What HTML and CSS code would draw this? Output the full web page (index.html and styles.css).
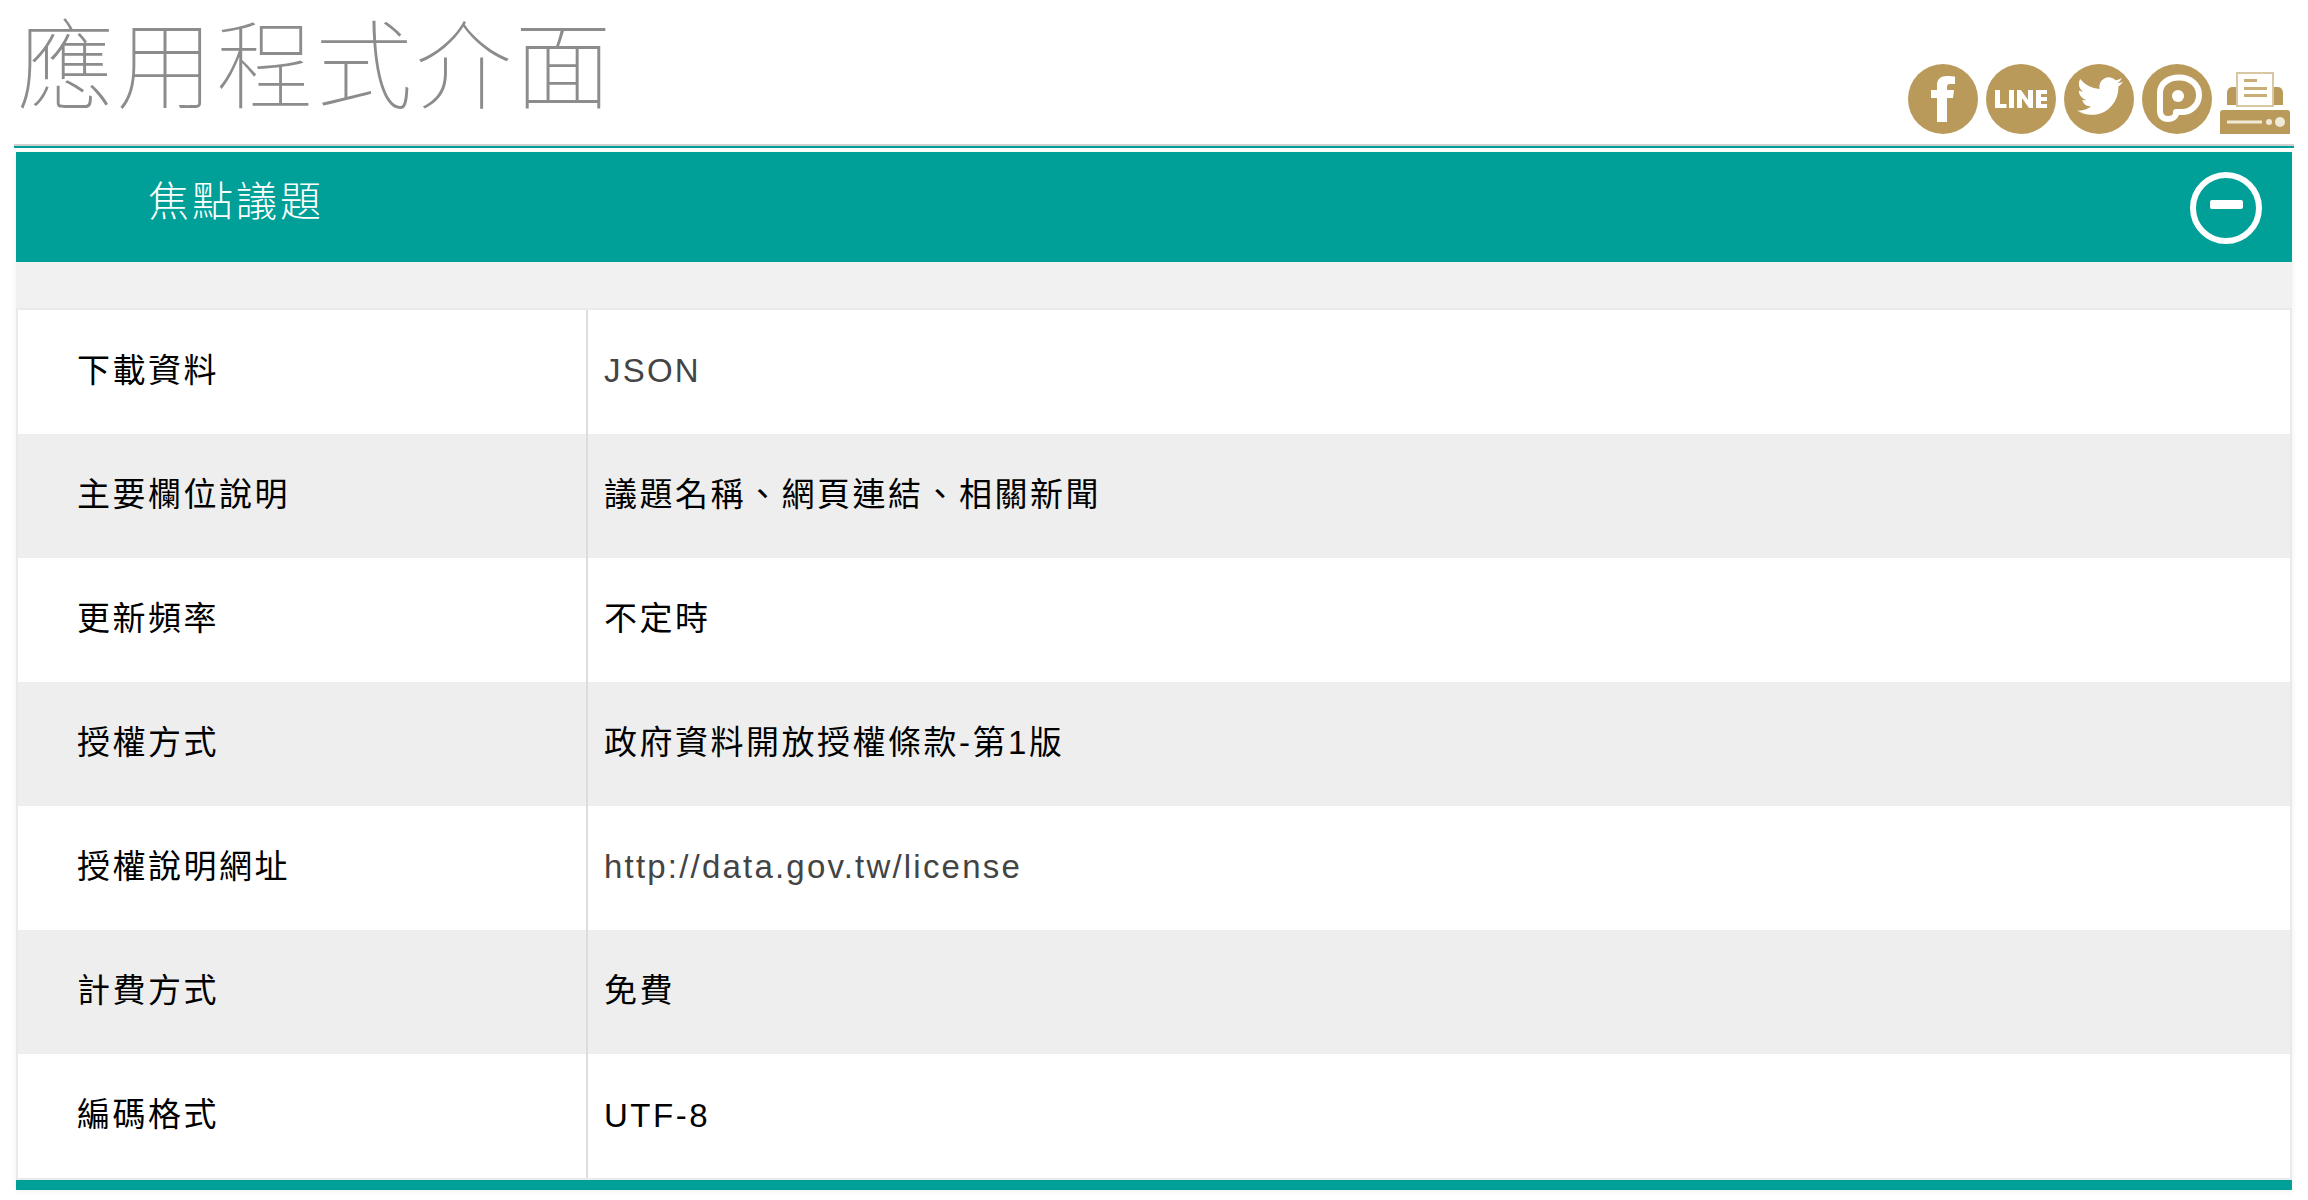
FILE: index.html
```html
<!DOCTYPE html>
<html lang="zh-Hant">
<head>
<meta charset="utf-8">
<title>應用程式介面</title>
<link rel="stylesheet" href="styles.css">
</head>
<body>
<header class="page-head">
  <h1 class="page-title">應用程式介面</h1>
  <div class="tools">
    <a class="tool" aria-label="Facebook"><svg viewBox="0 0 70 70"><circle cx="35" cy="35" r="35" fill="#b99a5b"/><path fill="#fff" d="M29 58V34h-6v-8h6v-5c0-6 4-9 10-9 3 0 6 .3 8 .6v7.400h-5c-2.500 0-3 1.500-3 3v3h7l-1 8h-6v24z"/></svg></a>
    <a class="tool" aria-label="LINE"><svg viewBox="0 0 70 70"><circle cx="35" cy="35" r="35" fill="#b99a5b"/><g fill="#fff"><path d="M9 26h5v14h6.500v4H9z"/><path d="M23 26h5v18h-5z"/><path d="M31 26h4l7 10V26h5v18h-4l-7-10v10h-5z"/><path d="M50 26h11v4h-6v3h6v4h-6v3h6v4H50z"/></g></svg></a>
    <a class="tool" aria-label="Twitter"><svg viewBox="0 0 70 70"><circle cx="35" cy="35" r="35" fill="#b99a5b"/><path transform="translate(13 9) scale(1.92)" fill="#fff" d="M23.953 4.57a10 10 0 01-2.825.775 4.958 4.958 0 002.163-2.723c-.951.555-2.005.959-3.127 1.184a4.92 4.92 0 00-8.384 4.482C7.69 8.095 4.067 6.13 1.64 3.162a4.822 4.822 0 00-.666 2.475c0 1.71.87 3.213 2.188 4.096a4.904 4.904 0 01-2.228-.616v.06a4.923 4.923 0 003.946 4.827 4.996 4.996 0 01-2.212.085 4.936 4.936 0 004.604 3.417 9.867 9.867 0 01-6.102 2.105c-.39 0-.779-.023-1.17-.067a13.995 13.995 0 007.557 2.209c9.053 0 13.998-7.496 13.998-13.985 0-.21 0-.42-.015-.63A9.935 9.935 0 0024 4.59z"/></svg></a>
    <a class="tool" aria-label="Plurk"><svg viewBox="0 0 70 70"><circle cx="35" cy="35" r="35" fill="#b99a5b"/><path fill="none" stroke="#fff" stroke-width="6" stroke-linejoin="round" d="M18 29C18 19 27 13.500 37 13.500 49 13.500 57 21 57 31 57 41 49 48 40 48H34V49C34 53 30 55 26 55 21 55 18 52 18 47Z"/><circle cx="36" cy="32" r="6" fill="#fff"/></svg></a>
    <a class="tool" aria-label="列印"><svg viewBox="0 0 70 70"><path fill="#b99a5b" d="M0 49c0-2 1-3 3-3h64c2 0 3 1 3 3v21H0z"/><path fill="#b99a5b" d="M7 41V29c0-3 2-6 5-6h46c3 0 5 3 5 6v12z"/><path fill="#fff" stroke="#d9c7a3" stroke-width="2" d="M17 42V9h36v33z"/><path fill="#c9ae78" d="M24 15h13v3H24zM24 23h23v3H24zM24 30h23v3H24z"/><g fill="#f1e9d8"><path d="M7 56.500h35v3H7z"/><circle cx="49" cy="58" r="3"/><circle cx="60" cy="58" r="5"/></g></svg></a>
  </div>
</header>
<section class="panel">
  <div class="panel-head">
    <h2 class="panel-title">焦點議題</h2>
    <span class="collapse" aria-label="收合"><span class="collapse-bar"></span></span>
  </div>
  <div class="panel-gap"></div>
  <table class="info">
    <tbody>
      <tr><th>下載資料</th><td class="link">JSON</td></tr>
      <tr><th>主要欄位說明</th><td class="cjk">議題名稱、網頁連結、相關新聞</td></tr>
      <tr><th>更新頻率</th><td class="cjk">不定時</td></tr>
      <tr><th>授權方式</th><td class="cjk">政府資料開放授權條款-第1版</td></tr>
      <tr><th>授權說明網址</th><td class="link">http://data.gov.tw/license</td></tr>
      <tr><th>計費方式</th><td class="cjk">免費</td></tr>
      <tr><th>編碼格式</th><td>UTF-8</td></tr>
    </tbody>
  </table>
</section>
</body>
</html>
```
FILE: styles.css
```css
* { box-sizing: border-box; }
html, body { margin: 0; padding: 0; background: #fff; }
body {
  width: 2308px;
  height: 1200px;
  overflow: hidden;
  font-family: "Liberation Sans", "Noto Sans CJK TC", sans-serif;
  color: #000;
}
.page-head {
  margin-left: 14px;
  width: 2280px;
  height: 148px;
  display: flex;
  justify-content: space-between;
  align-items: flex-end;
  border-bottom: 2px solid #009f97;
  box-shadow: inset 0 -2px 0 #d0d0d0;
  padding: 0 4px 12px 3px;
}
.page-title {
  margin: 0 0 25px;
  font-size: 97px;
  line-height: 100px;
  font-weight: 100;
  letter-spacing: 2.500px;
  color: #8c8c8c;
  font-family: "Noto Sans CJK TC", sans-serif;
}
.tools { display: flex; gap: 8px; }
.tool { display: block; width: 70px; height: 70px; }
.tool svg { display: block; width: 70px; height: 70px; }
.panel {
  margin: 4px 0 0 16px;
  width: 2276px;
  box-shadow: 0 1px 6px rgba(0,0,0,.07);
  border-bottom: 10px solid #009f97;
}
.panel-head {
  height: 110px;
  background: #009f97;
  display: flex;
  align-items: flex-start;
  justify-content: space-between;
  padding: 20px 30px 0 132px;
}
.panel-title {
  margin: -3px 0 0;
  font-size: 41px;
  line-height: 58px;
  font-weight: 300;
  letter-spacing: 3px;
  color: #fff;
  font-family: "Noto Sans CJK TC", sans-serif;
}
.collapse {
  width: 72px;
  height: 72px;
  border: 6px solid #fff;
  border-radius: 50%;
  display: flex;
  align-items: center;
  justify-content: center;
  padding-bottom: 8px;
}
.collapse-bar { width: 33px; height: 9px; background: #fff; border-radius: 2px; }
.panel-gap { height: 46px; background: #f1f1f1; }
.info {
  width: 100%;
  border-collapse: separate;
  border-spacing: 0;
  table-layout: fixed;
  background: #fff;
  border: 2px solid #eaeaea;
}
.info tr { height: 124px; }
.info tr:nth-child(even) { background: #eee; }
.info th, .info td {
  padding: 0;
  font-size: 33px;
  font-weight: 400;
  letter-spacing: 2.500px;
  text-align: left;
  vertical-align: middle;
}
.info th { width: 568px; padding: 0 0 8px 59px; }
.info td { border-left: 2px solid #ddd; padding-left: 16px; }
.info td.cjk { padding-bottom: 8px; }
.info td.link { color: #444; letter-spacing: 2.200px; padding-bottom: 2px; }
```
